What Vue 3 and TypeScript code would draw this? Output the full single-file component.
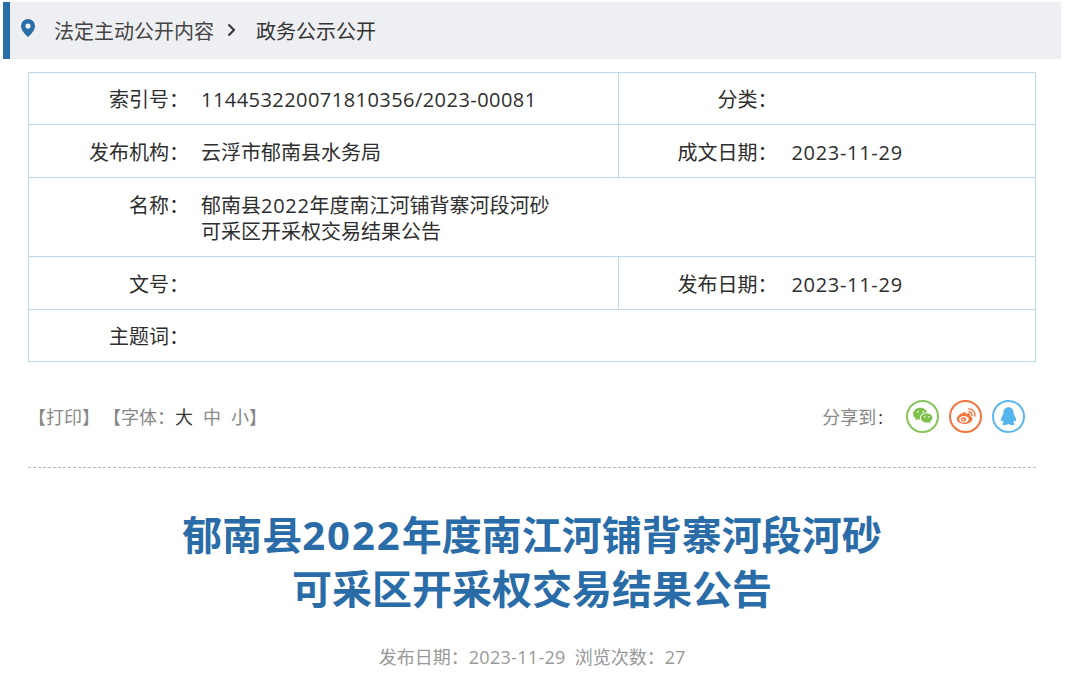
<script setup lang="ts">
interface Cell { label: string; value: string; wide?: boolean }
const rows: { cells: Cell[]; tall?: boolean }[] = [
  { cells: [{ label: '索引号：', value: '114453220071810356/2023-00081' }, { label: '分类：', value: '' }] },
  { cells: [{ label: '发布机构：', value: '云浮市郁南县水务局' }, { label: '成文日期：', value: '2023-11-29' }] },
  { cells: [{ label: '名称：', value: '郁南县2022年度南江河铺背寨河段河砂\n可采区开采权交易结果公告', wide: true }], tall: true },
  { cells: [{ label: '文号：', value: '' }, { label: '发布日期：', value: '2023-11-29' }] },
  { cells: [{ label: '主题词：', value: '', wide: true }] }
]
const parts = (v: string) => v.split(/(\d[\d\-/]*)/)
const partClass = (p: string, i: number) => (i % 2 ? (p.length > 10 ? 'num-long' : 'num') : '')
</script>

<template>
  <div class="page">
    <div class="crumb">
      <svg class="pin" width="14" height="18" viewBox="0 0 14 18">
        <path fill="#2a6ea8" fill-rule="evenodd" d="M7 0a7 7 0 0 0-7 7c0 4.6 5 9.4 7 11 2-1.600 7-6.400 7-11a7 7 0 0 0-7-7zm0 4.500a2.600 2.600 0 1 1 0 5.200 2.600 2.600 0 0 1 0-5.200z" />
      </svg>
      <span class="crumb-a">法定主动公开内容</span>
      <svg class="chev" width="9" height="14" viewBox="0 0 9 14">
        <path d="M1.500 1.500 7 7l-5.500 5.500" fill="none" stroke="#333" stroke-width="2" />
      </svg>
      <span class="crumb-b">政务公示公开</span>
    </div>

    <div class="info">
      <div v-for="(row, i) in rows" :key="i" class="row" :class="{ tall: row.tall }">
        <div v-for="cell in row.cells" :key="cell.label" class="cell" :class="{ wide: cell.wide }">
          <span class="label">{{ cell.label }}</span>
          <span class="value"><span v-for="(p, j) in parts(cell.value)" :key="j" :class="partClass(p, j)">{{ p }}</span></span>
        </div>
      </div>
    </div>

    <div class="tools">
      <div class="tools-left">
        <span>【打印】</span>
        <span class="font-set">【字体：<b class="on">大</b><b>中</b><b>小</b>】</span>
      </div>
      <div class="share">
        <span class="share-label">分享到<i>:</i></span>
        <span class="circle wx">
          <svg width="24" height="20" viewBox="0 0 24 20">
            <path fill="#7fc04e" d="M9 0C4 0 0 3.200 0 7.300c0 2.300 1.300 4.300 3.300 5.600L2.500 15.500l3-1.600c1 .3 2.100.5 3.100.5-.2-.7-.3-1.300-.3-2 0-3.800 3.600-6.700 8-6.700h.6C15.900 2.400 12.800 0 9 0z" />
            <path fill="#7fc04e" d="M16.300 7C12.500 7 9.500 9.500 9.500 12.500s3 5.500 6.800 5.500c.8 0 1.600-.1 2.400-.4l2.500 1.400-.7-2.200c1.700-1.100 2.800-2.700 2.800-4.300C23.800 9.500 20.300 7 16.300 7z" />
            <circle cx="6" cy="5" r="1" fill="#fff" />
            <circle cx="12" cy="5" r="1" fill="#fff" />
            <circle cx="14" cy="11" r=".9" fill="#fff" />
            <circle cx="19" cy="11" r=".9" fill="#fff" />
          </svg>
        </span>
        <span class="circle wb">
          <svg width="24" height="20" viewBox="0 0 24 20">
            <path fill="#f4753f" d="M10 5.500C5 6.900 1 10.300 1 13.600 1 17 5 19.500 10 19.500c5.600 0 9.800-3 9.800-6.300 0-2-1.800-2.900-3-3.300.5-1.500.3-2.800-1-3.200-1.200-.3-3 .3-4.300.9.300-1.300.1-3.400-1.500-2.600z" />
            <ellipse cx="9.500" cy="14" rx="5.800" ry="4" fill="#fff" />
            <ellipse cx="9" cy="14.200" rx="3.200" ry="2.600" fill="#f4753f" />
            <circle cx="8.500" cy="14.500" r="1.100" fill="#fff" />
            <path d="M15 1.500a7 7 0 0 1 7.500 8.500M15.500 5a3.500 3.500 0 0 1 3.600 4.300" fill="none" stroke="#f4753f" stroke-width="1.700" stroke-linecap="round" />
          </svg>
        </span>
        <span class="circle qq">
          <svg width="20" height="22" viewBox="0 0 20 22">
            <path fill="#55b5ec" d="M10 0C6 0 3.900 3 3.900 6.500c0 1 0 1.500-.3 2.200C2.300 11 .8 13.700 1 16c.2 1 .8 1 1.900-.5.300 1.100.9 2 1.600 2.700-1.300.6-2 1.400-1.500 2.300.6 1 3.700 1 6-.3h2c2.300 1.300 5.400 1.300 6 .3.500-.9-.2-1.700-1.500-2.300.7-.7 1.300-1.600 1.600-2.700 1.100 1.500 1.700 1.500 1.900.5.200-2.300-1.300-5-2.600-7.300-.3-.7-.3-1.200-.3-2.200C16.100 3 14 0 10 0z" />
          </svg>
        </span>
      </div>
    </div>

    <div class="rule"></div>

    <h1 class="title">郁南县<span class="digits">2022</span>年度南江河铺背寨河段河砂<br />可采区开采权交易结果公告</h1>
    <div class="meta"><span>发布日期：<span class="meta-num">2023-11-29</span></span><span>浏览次数：27</span></div>
  </div>
</template>

<style>
html, body { margin: 0; background: #fff; overflow: hidden; }
</style>

<style scoped>
.page {
  width: 1080px;
  height: 690px;
  overflow: hidden;
  box-sizing: border-box;
  padding-top: 2px;
  font-family: "Open Sans", "Noto Sans CJK SC", sans-serif;
  color: #333;
}
.crumb {
  margin-left: 3px;
  width: 1058px;
  height: 57px;
  box-sizing: border-box;
  border-left: 7px solid #2a6ea8;
  background: #eeeff3;
  display: flex;
  align-items: center;
  font-size: 20px;
  line-height: 26px;
  padding-left: 11px;
}
.pin { margin-top: -5px; }
.crumb-a { margin-left: 19px; color: #444; margin-top: 3px; }
.chev { margin-left: 13px; margin-top: -2px; }
.crumb-b { margin-left: 20px; color: #333; margin-top: 3px; }

.info {
  margin: 13px 0 0 28px;
  width: 1008px;
  box-sizing: border-box;
  border: 1px solid #bcd8ec;
  border-bottom: 0;
  font-size: 20px;
  line-height: 26px;
  color: #2e2e2e;
}
.row {
  display: flex;
  height: 53px;
  box-sizing: border-box;
  border-bottom: 1px solid #bcd8ec;
}
.row:first-child { height: 52px; }
.row:last-child { height: 52px; }
.row.tall { height: 79px; }
.cell {
  display: flex;
  align-items: center;
  width: 590px;
  box-sizing: border-box;
  padding-top: 3px;
}
.cell + .cell {
  width: 417px;
  border-left: 1px solid #bcd8ec;
}
.cell.wide { width: 100%; }
.label {
  flex: 0 0 160px;
  text-align: right;
  white-space: nowrap;
}
.cell + .cell .label { flex-basis: 158px; }
.value {
  margin-left: 12px;
  white-space: pre-line;
}
.cell + .cell .value { margin-left: 14px; }
.tall .cell { align-items: flex-start; padding-top: 15px; }
.num { letter-spacing: .7px; }
.num-long { letter-spacing: .45px; }

.tools {
  margin: 37px 0 0 28px;
  width: 997px;
  height: 36px;
  display: flex;
  align-items: center;
  justify-content: space-between;
  font-size: 18px;
  color: #888;
}
.tools > div { margin-top: -2px; }
.tools-left { display: flex; }
.font-set { margin-left: 3px; }
.font-set b { font-weight: 400; margin-right: 10px; }
.font-set b:last-of-type { margin-right: 0; }
.font-set b.on { color: #333; }
.share { display: flex; align-items: center; }
.share-label { color: #888; margin-right: 23px; }
.share-label i { font-style: normal; color: #333; margin-left: 2px; }
.circle {
  width: 33px;
  height: 33px;
  box-sizing: border-box;
  border-radius: 50%;
  display: flex;
  align-items: center;
  justify-content: center;
  border: 2px solid;
  margin-left: 10px;
}
.circle svg { width: 20px; height: 18px; }
.qq svg { width: 17px; height: 19px; }
.wx { border-color: #85c55a; margin-left: 0; }
.wb { border-color: #f4753f; }
.qq { border-color: #5ab8ee; }

.rule {
  margin: 32px 0 0 28px;
  width: 1008px;
  border-top: 1px dashed #bbb;
}
.title {
  margin: 40px 0 0 28px;
  width: 1008px;
  text-align: center;
  font-size: 40px;
  line-height: 54px;
  font-weight: 700;
  color: #2a6ca8;
}
.digits { letter-spacing: 2px; }
.meta {
  margin: 27px 0 0 28px;
  width: 1008px;
  display: flex;
  justify-content: center;
  gap: 9px;
  font-size: 18px;
  color: #999;
}
.meta-num { letter-spacing: .3px; }
</style>
